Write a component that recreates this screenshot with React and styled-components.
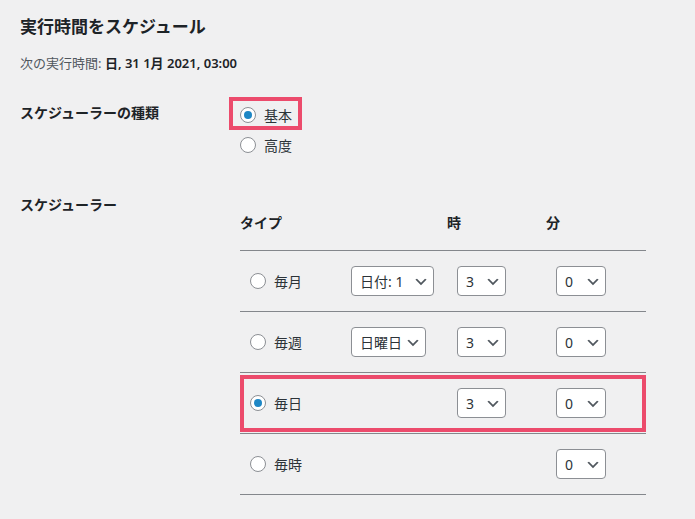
import React from "react";
import styled, { createGlobalStyle } from "styled-components";

const GlobalStyle = createGlobalStyle`
  body {
    margin: 0;
    background: #f0f0f1;
    color: #3c434a;
    font-family: "Noto Sans", "Noto Sans CJK JP", sans-serif;
    font-size: 13px;
  }
`;

const Page = styled.div`
  padding: 15px 20px 0;
`;

const Title = styled.h2`
  margin: 0;
  font-size: 17px;
  line-height: 24px;
  font-weight: 700;
  color: #1d2327;
`;

const NextRun = styled.p`
  margin: 14px 0 0;
  font-size: 13px;
  line-height: 20px;
  color: #50575e;

  strong {
    color: #1d2327;
    font-weight: 600;
  }
`;

const FormRow = styled.div`
  display: grid;
  grid-template-columns: 220px 1fr;
  margin-top: ${(p) => p.$gap}px;
`;

const RowLabel = styled.div`
  font-size: 14px;
  line-height: 20px;
  font-weight: 600;
  color: #1d2327;
`;

const Options = styled.div`
  display: flex;
  flex-direction: column;
  align-items: flex-start;
  gap: 6px;
`;

const Option = styled.label`
  position: relative;
  display: inline-flex;
  align-items: center;
  gap: 8px;
  height: 24px;
  font-size: 14px;
  color: #2c3338;

  &::after {
    content: "";
    display: ${(p) => (p.$marked ? "block" : "none")};
    position: absolute;
    top: -6px;
    bottom: -3px;
    left: -11px;
    right: -10px;
    border: 4px solid #ec4b6c;
    pointer-events: none;
  }
`;

const Radio = styled.input.attrs({ type: "radio" })`
  appearance: none;
  margin: 0;
  width: 16px;
  height: 16px;
  flex: none;
  border: 1px solid #8c8f94;
  border-radius: 50%;
  background: #fff;
  display: grid;
  place-items: center;
  box-sizing: border-box;

  &:checked::before {
    content: "";
    width: 8px;
    height: 8px;
    border-radius: 50%;
    background: #1e87c5;
  }
`;

const Table = styled.div`
  width: 406px;
`;

const Grid = styled.div`
  position: relative;
  display: grid;
  grid-template-columns: 101px 106px 99px 100px;
  align-items: center;
  height: ${(p) => (p.$head ? 55 : 60)}px;
  border-top: ${(p) => (p.$head ? "none" : "1px solid #84878c")};

  &:last-child {
    border-bottom: 1px solid #84878c;
  }

  &::after {
    content: "";
    display: ${(p) => (p.$marked ? "block" : "none")};
    position: absolute;
    top: 2px;
    bottom: 1px;
    left: 0;
    right: 0;
    border: 4px solid #ec4b6c;
    pointer-events: none;
  }
`;

const HeadCell = styled.div`
  font-size: 14px;
  font-weight: 700;
  color: #1d2327;
  line-height: 20px;
`;

const Cell = styled.div`
  padding-left: 10px;
  display: flex;
  align-items: center;
`;

const SelectWrap = styled.div`
  position: relative;
  width: ${(p) => p.$w}px;
  height: 30px;

  svg {
    position: absolute;
    right: 5px;
    top: 8px;
    pointer-events: none;
  }
`;

const Select = styled.select`
  appearance: none;
  width: 100%;
  height: 100%;
  margin: 0;
  border: 1px solid #8c8f94;
  border-radius: 4px;
  background: #fff;
  padding: 0 24px 0 8px;
  font-family: "Noto Sans", "Noto Sans CJK JP", sans-serif;
  font-size: 14px;
  color: #2c3338;
  box-sizing: border-box;
`;

const Chevron = () => (
  <svg width="16" height="16" viewBox="0 0 20 20">
    <path d="M5 6l5 5 5-5 2 1-7 7-7-7 2-1z" fill="#50575e" />
  </svg>
);

const Dropdown = ({ width, value, options }) => (
  <SelectWrap $w={width}>
    <Select defaultValue={value}>
      {options.map((o) => (
        <option key={o} value={o}>
          {o}
        </option>
      ))}
    </Select>
    <Chevron />
  </SelectWrap>
);

const hours = Array.from({ length: 24 }, (_, i) => String(i));
const minutes = ["0", "5", "10", "15", "20", "25", "30", "35", "40", "45", "50", "55"];

const rows = [
  { label: "毎月", day: { w: 83, value: "日付: 1", options: ["日付: 1", "日付: 2"] }, hour: true },
  { label: "毎週", day: { w: 75, value: "日曜日", options: ["日曜日", "月曜日"] }, hour: true },
  { label: "毎日", hour: true, checked: true },
  { label: "毎時" },
];

export default function App() {
  return (
    <>
      <GlobalStyle />
      <Page>
        <Title>実行時間をスケジュール</Title>
        <NextRun>
          次の実行時間: <strong>日, 31 1月 2021, 03:00</strong>
        </NextRun>

        <FormRow $gap={30}>
          <RowLabel>スケジューラーの種類</RowLabel>
          <Options>
            <Option $marked>
              <Radio name="kind" defaultChecked />
              基本
            </Option>
            <Option>
              <Radio name="kind" />
              高度
            </Option>
          </Options>
        </FormRow>

        <FormRow $gap={38}>
          <RowLabel>スケジューラー</RowLabel>
          <Table>
            <Grid $head>
              <HeadCell>タイプ</HeadCell>
              <HeadCell />
              <HeadCell>時</HeadCell>
              <HeadCell>分</HeadCell>
            </Grid>
            {rows.map((r) => (
              <Grid key={r.label} $marked={r.checked}>
                <Cell>
                  <Option>
                    <Radio name="type" defaultChecked={r.checked} />
                    {r.label}
                  </Option>
                </Cell>
                <Cell>
                  {r.day && <Dropdown width={r.day.w} value={r.day.value} options={r.day.options} />}
                </Cell>
                <Cell>{r.hour && <Dropdown width={49} value="3" options={hours} />}</Cell>
                <Cell>
                  <Dropdown width={50} value="0" options={minutes} />
                </Cell>
              </Grid>
            ))}
          </Table>
        </FormRow>
      </Page>
    </>
  );
}
